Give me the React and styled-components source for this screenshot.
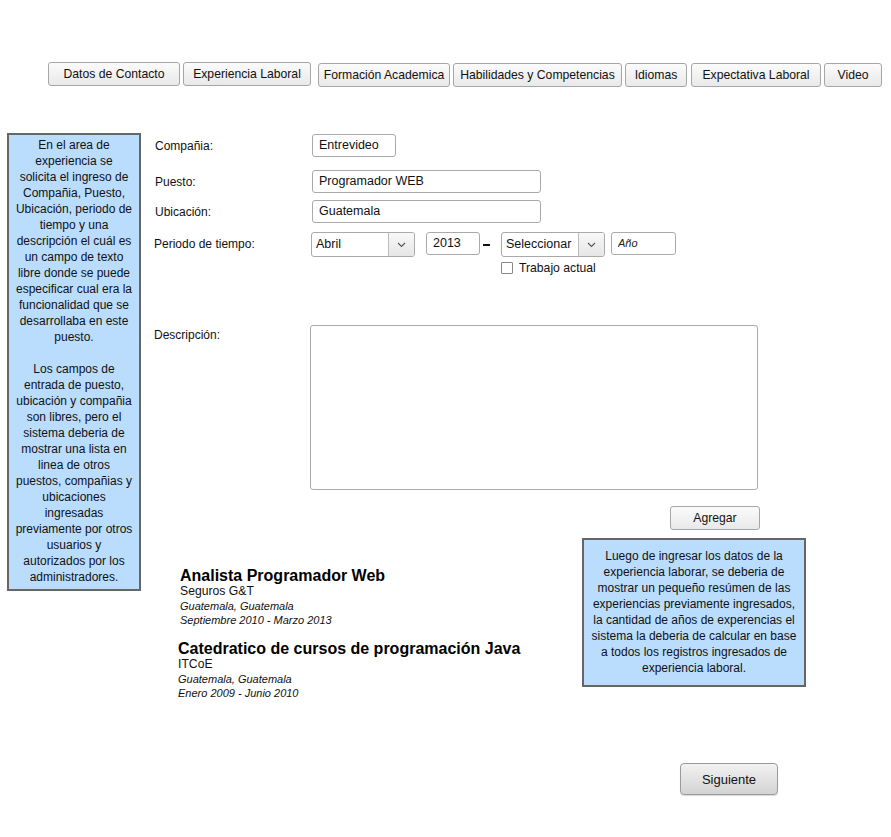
import React from "react";
import styled, { createGlobalStyle } from "styled-components";

const GlobalStyle = createGlobalStyle`
  html, body { margin: 0; padding: 0; background: #fff; }
  body { font-family: "Liberation Sans", Arial, sans-serif; color: #000; }
  * { box-sizing: border-box; }
`;

const Page = styled.div`
  width: 891px;
  min-height: 837px;
  padding-top: 62px;
`;

const TabBar = styled.nav`
  display: flex;
  align-items: flex-start;
  gap: 3px;
  padding-left: 48px;
`;

const Tab = styled.button`
  width: ${(p) => p.$w}px;
  height: 24px;
  margin-left: ${(p) => p.$ml || 0}px;
  margin-top: ${(p) => p.$mt || 0}px;
  padding: 0;
  border: 1px solid #a6a6a6;
  border-radius: 3px;
  background: linear-gradient(#fbfbfb, #e9e9e9);
  font-family: "Liberation Sans", Arial, sans-serif;
  font-size: 12.2px;
  color: #111;
  display: flex;
  align-items: center;
  justify-content: center;
  white-space: nowrap;
`;

const Main = styled.div`
  display: flex;
  align-items: flex-start;
  margin-top: 46px;
  padding-left: 7px;
`;

const Note = styled.div`
  width: ${(p) => p.$w}px;
  height: ${(p) => p.$h}px;
  border: 2px solid #666;
  background: #bbddfd;
  padding: ${(p) => p.$pad};
  text-align: center;
  font-size: 12px;
  line-height: 16px;
  color: #111;
  white-space: nowrap;
`;

const FormCol = styled.div`
  margin-left: 13px;
  width: 652px;
  display: flex;
  flex-direction: column;
`;

const FieldRow = styled.div`
  display: flex;
  align-items: ${(p) => p.$align || "center"};
  margin-top: ${(p) => p.$mt || 0}px;
`;

const Label = styled.label`
  width: ${(p) => p.$w || 157}px;
  flex-shrink: 0;
  font-size: 12px;
  line-height: ${(p) => p.$lh || 16}px;
  padding-top: ${(p) => p.$pt || 0}px;
  padding-left: ${(p) => p.$pl || 0}px;
  color: #111;
`;

const TextInput = styled.input`
  width: ${(p) => p.$w}px;
  height: 23px;
  margin-left: ${(p) => p.$ml || 0}px;
  border: 1px solid #aaa;
  border-radius: 3px;
  background: #fff;
  padding: 0 6px 1px;
  font-family: "Liberation Sans", Arial, sans-serif;
  font-size: ${(p) => (p.$italic ? 11 : 12.5)}px;
  font-style: ${(p) => (p.$italic ? "italic" : "normal")};
  color: #111;
  outline: none;
  &::placeholder { color: #222; }
`;

const Select = styled.div`
  width: 104px;
  height: 25px;
  margin-left: ${(p) => p.$ml || 0}px;
  border: 1px solid #aaa;
  border-radius: 3px;
  background: #fff;
  display: flex;
  overflow: hidden;
`;

const SelectValue = styled.span`
  flex: 1;
  padding-left: 4px;
  font-size: 12.5px;
  line-height: 23px;
  color: #111;
  white-space: nowrap;
`;

const SelectArrow = styled.span`
  width: 26px;
  border-left: 1px solid #bbb;
  background: linear-gradient(#f8f8f8, #e6e6e6);
  display: flex;
  align-items: center;
  justify-content: center;
`;

const Dash = styled.span`
  width: 7px;
  margin-left: 3px;
  margin-top: 12px;
  height: 2px;
  background: #111;
`;

const CheckRow = styled.div`
  display: flex;
  align-items: center;
  height: 12px;
  margin-top: 5px;
  padding-left: 347px;
`;

const CheckBox = styled.span`
  width: 12px;
  height: 12px;
  border: 1px solid #888;
  border-radius: 1px;
  background: #fff;
`;

const CheckLabel = styled.span`
  margin-left: 6px;
  font-size: 12.2px;
  color: #111;
`;

const TextArea = styled.textarea`
  width: 448px;
  height: 165px;
  border: 1px solid #aaa;
  border-radius: 3px;
  resize: none;
  outline: none;
  background: #fff;
`;

const Button = styled.button`
  width: ${(p) => p.$w}px;
  height: ${(p) => p.$h}px;
  margin-left: ${(p) => p.$ml}px;
  margin-top: ${(p) => p.$mt}px;
  padding: 0;
  border: 1px solid ${(p) => (p.$big ? "#9a9a9a" : "#a6a6a6")};
  border-radius: ${(p) => (p.$big ? 4 : 3)}px;
  background: ${(p) =>
    p.$big ? "linear-gradient(#f2f2f2, #d3d3d3)" : "linear-gradient(#fbfbfb, #e9e9e9)"};
  box-shadow: ${(p) => (p.$big ? "0 1px 1px rgba(0,0,0,0.15)" : "none")};
  font-family: "Liberation Sans", Arial, sans-serif;
  font-size: ${(p) => (p.$big ? 13 : 12.2)}px;
  color: #111;
`;

const Bottom = styled.div`
  display: grid;
  grid-template-columns: 428px 224px;
  align-items: start;
  margin-top: 8px;
`;

const ExperienceList = styled.div`
  padding-top: 30px;
  padding-left: 26px;
  display: flex;
  flex-direction: column;
  gap: 14px;
`;

const Entry = styled.div`
  margin-left: ${(p) => p.$ml || 0}px;
  display: flex;
  flex-direction: column;
`;

const EntryTitle = styled.div`
  font-size: 16px;
  font-weight: bold;
  line-height: 16px;
  color: #000;
  white-space: nowrap;
`;

const EntryCompany = styled.div`
  font-size: 12.2px;
  line-height: 15px;
  color: #111;
`;

const EntryMeta = styled.div`
  font-size: 11px;
  font-style: italic;
  line-height: 14px;
  color: #111;
`;

const Chevron = () => (
  <svg width="9" height="6" viewBox="0 0 9 6">
    <polyline points="1,1 4.5,4.5 8,1" fill="none" stroke="#555" strokeWidth="1.1" />
  </svg>
);

const tabs = [
  { t: "Datos de Contacto", w: 132 },
  { t: "Experiencia Laboral", w: 128 },
  { t: "Formación Academica", w: 132, ml: 4, mt: 1 },
  { t: "Habilidades y Competencias", w: 169, mt: 1 },
  { t: "Idiomas", w: 62, mt: 1 },
  { t: "Expectativa Laboral", w: 130, ml: 1, mt: 1 },
  { t: "Video", w: 58, mt: 1 },
];

const leftNote = [
  "En el area de",
  "experiencia se",
  "solicita el ingreso de",
  "Compañia, Puesto,",
  "Ubicación, periodo de",
  "tiempo y una",
  "descripción el cuál es",
  "un campo de texto",
  "libre donde se puede",
  "especificar cual era la",
  "funcionalidad que se",
  "desarrollaba en este",
  "puesto.",
  "",
  "Los campos de",
  "entrada de puesto,",
  "ubicación y compañia",
  "son libres, pero el",
  "sistema deberia de",
  "mostrar una lista en",
  "linea de otros",
  "puestos, compañias y",
  "ubicaciones",
  "ingresadas",
  "previamente por otros",
  "usuarios y",
  "autorizados por los",
  "administradores.",
];

const rightNote = [
  "Luego de ingresar los datos de la",
  "experiencia laborar, se deberia de",
  "mostrar un pequeño resúmen de las",
  "experiencias previamente ingresados,",
  "la cantidad de años de experencias el",
  "sistema la deberia de calcular en base",
  "a todos los registros ingresados de",
  "experiencia laboral.",
];

const experiences = [
  {
    title: "Analista Programador Web",
    company: "Seguros G&T",
    place: "Guatemala, Guatemala",
    dates: "Septiembre 2010 - Marzo 2013",
    ml: 0,
  },
  {
    title: "Catedratico de cursos de programación Java",
    company: "ITCoE",
    place: "Guatemala, Guatemala",
    dates: "Enero 2009 - Junio 2010",
    ml: -2,
  },
];

const Lines = ({ lines }) =>
  lines.map((l, i) => <div key={i}>{l || "\u00a0"}</div>);

export default function App() {
  return (
    <>
      <GlobalStyle />
      <Page>
        <TabBar>
          {tabs.map((t) => (
            <Tab key={t.t} $w={t.w} $ml={t.ml} $mt={t.mt}>
              {t.t}
            </Tab>
          ))}
        </TabBar>

        <Main>
          <Note $w={134} $h={458} $pad="2px 0 0">
            <Lines lines={leftNote} />
          </Note>

          <FormCol>
            <FieldRow $mt={1}>
              <Label $pl={1}>Compañia:</Label>
              <TextInput $w={84} $ml={1} readOnly value="Entrevideo" />
            </FieldRow>
            <FieldRow $mt={13}>
              <Label $pl={1}>Puesto:</Label>
              <TextInput $w={229} $ml={1} readOnly value="Programador WEB" />
            </FieldRow>
            <FieldRow $mt={7}>
              <Label $pl={1}>Ubicación:</Label>
              <TextInput $w={229} $ml={1} readOnly value="Guatemala" />
            </FieldRow>
            <FieldRow $mt={9} $align="flex-start">
              <Label $lh={24}>Periodo de tiempo:</Label>
              <Select>
                <SelectValue>Abril</SelectValue>
                <SelectArrow>
                  <Chevron />
                </SelectArrow>
              </Select>
              <TextInput $w={54} $ml={11} readOnly value="2013" />
              <Dash />
              <Select $ml={11}>
                <SelectValue>Seleccionar</SelectValue>
                <SelectArrow>
                  <Chevron />
                </SelectArrow>
              </Select>
              <TextInput $w={65} $ml={6} $italic readOnly placeholder="Año" />
            </FieldRow>
            <CheckRow>
              <CheckBox />
              <CheckLabel>Trabajo actual</CheckLabel>
            </CheckRow>
            <FieldRow $mt={51} $align="flex-start">
              <Label $w={156} $pt={2}>Descripción:</Label>
              <TextArea readOnly />
            </FieldRow>
            <Button $w={90} $h={24} $ml={516} $mt={16}>
              Agregar
            </Button>

            <Bottom>
              <ExperienceList>
                {experiences.map((e) => (
                  <Entry key={e.title} $ml={e.ml}>
                    <EntryTitle>{e.title}</EntryTitle>
                    <EntryCompany>{e.company}</EntryCompany>
                    <EntryMeta>{e.place}</EntryMeta>
                    <EntryMeta>{e.dates}</EntryMeta>
                  </Entry>
                ))}
              </ExperienceList>
              <Note $w={224} $h={149} $pad="8px 0 0">
                <Lines lines={rightNote} />
              </Note>
            </Bottom>

            <Button $big $w={98} $h={32} $ml={526} $mt={63}>
              Siguiente
            </Button>
          </FormCol>
        </Main>
      </Page>
    </>
  );
}
